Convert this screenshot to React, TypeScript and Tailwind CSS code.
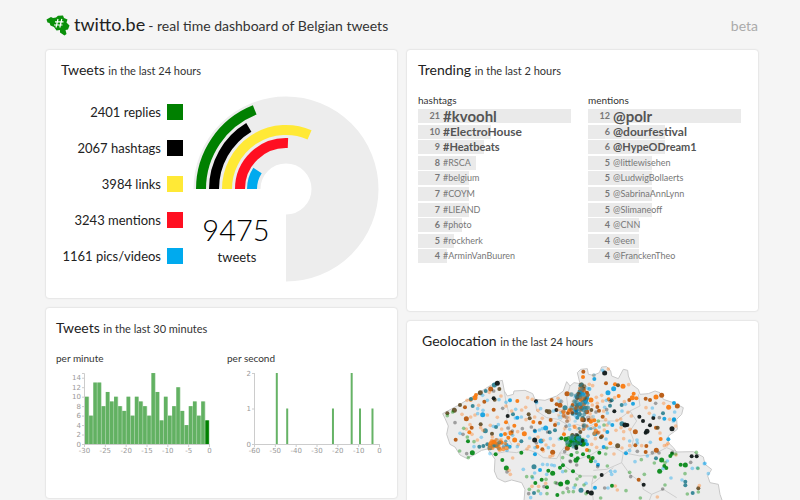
import React from "react";

const legend = [
  { value: 2401, label: "replies", color: "#008000", bg: "bg-[#008000]", r: 85 },
  { value: 2067, label: "hashtags", color: "#000000", bg: "bg-black", r: 72 },
  { value: 3984, label: "links", color: "#ffe936", bg: "bg-[#ffe936]", r: 59 },
  { value: 3243, label: "mentions", color: "#ff0f21", bg: "bg-[#ff0f21]", r: 46 },
  { value: 1161, label: "pics/videos", color: "#00aaee", bg: "bg-[#00aaee]", r: 34 },
];
const total = 9475;

const hashtags: [number, string][] = [
  [21, "#kvoohl"], [10, "#ElectroHouse"], [9, "#Heatbeats"], [8, "#RSCA"], [7, "#belgium"],
  [7, "#COYM"], [7, "#LIEAND"], [6, "#photo"], [5, "#rockherk"], [4, "#ArminVanBuuren"],
];
const mentions: [number, string][] = [
  [12, "@polr"], [6, "@dourfestival"], [6, "@HypeODream1"], [5, "@littlewisehen"], [5, "@LudwigBollaerts"],
  [5, "@SabrinaAnnLynn"], [5, "@Slimaneoff"], [4, "@CNN"], [4, "@een"], [4, "@FranckenTheo"],
];

const perMinute = [10, 6, 13, 13, 8, 11, 9, 10, 8, 7, 10, 6, 10, 9, 8, 6, 15, 11, 5, 10, 6, 8, 12, 7, 4, 8, 9, 6, 9, 5];
const perSecond: [number, number][] = [[10, 2], [15, 1], [37, 1], [46, 2], [50, 1], [56, 1]];

function Card({ className = "", children }: { className?: string; children: React.ReactNode }) {
  return (
    <section className={"rounded-[3px] bg-white shadow-[0_0_2px_rgba(0,0,0,0.2)] " + className}>{children}</section>
  );
}

function Title({ main, rest }: { main: string; rest: string }) {
  return (
    <h2 className="text-[14px] leading-5 text-[#222]">
      {main} <span className="text-[11px] text-[#333]">{rest}</span>
    </h2>
  );
}

function Gauge() {
  const cx = 94;
  const cy = 94;
  const arc = (r: number, deg: number) => {
    const a = ((180 + deg) * Math.PI) / 180;
    return `M${cx - r} ${cy}A${r} ${r} 0 ${deg > 180 ? 1 : 0} 1 ${cx + r * Math.cos(a)} ${cy + r * Math.sin(a)}`;
  };
  return (
    <svg viewBox="0 0 188 188" className="h-[188px] w-[188px] shrink-0" role="img" aria-label="9475 tweets">
      <path d={arc(59, 270)} fill="none" stroke="#ededed" strokeWidth="67" />
      {legend.map((l) => (
        <path key={l.label} d={arc(l.r, (270 * l.value) / total)} fill="none" stroke={l.color} strokeWidth="10" />
      ))}
      <text x="44" y="146" textAnchor="middle" fontSize="29" fontWeight="300" fill="#000">9475</text>
      <text x="45" y="167" textAnchor="middle" fontSize="13" fill="#222">tweets</text>
    </svg>
  );
}

function Ranking({ title, items }: { title: string; items: [number, string][] }) {
  const max = items[0][0];
  const size = (i: number) =>
    i === 0 ? "text-[15px] font-bold text-[#555]" : i === 1 ? "text-[12px] font-bold text-[#555]" : i === 2 ? "text-[11px] font-bold text-[#555]" : "text-[9px] text-[#777]";
  return (
    <div className="min-w-0 flex-1">
      <h3 className="text-[10px] leading-[14px] text-[#333]">{title}</h3>
      <ol className="mt-0.5 flex h-[156px] flex-col">
        {items.map(([n, name], i) => (
          <li key={name} className="grid flex-1 items-start">
            <span className="col-start-1 row-start-1 h-3.5 bg-[#eaeaea]" style={{ width: `${(n / max) * 100}%` }} />
            <span className="col-start-1 row-start-1 flex h-3.5 items-center gap-[3px] leading-[14px]">
              <span className="w-[22px] text-right text-[9px] font-bold text-[#777]">{n}</span>
              <span className={"whitespace-nowrap " + size(i)}>{name}</span>
            </span>
          </li>
        ))}
      </ol>
    </div>
  );
}

function Axes({ xs, ys, yMax }: { xs: number[]; ys: number[]; yMax: number }) {
  const x0 = xs[0];
  return (
    <g fontFamily="'DejaVu Sans', sans-serif" fontSize="7" fill="#999">
      <path d="M25 5.5H27.5V76.5H152.5V79" fill="none" stroke="#ccc" />
      {ys.map((v) => {
        const y = 76.5 - (71 * v) / yMax;
        return (
          <g key={v}>
            <path d={`M25 ${y}H28`} stroke="#ccc" />
            <text x="24" y={y + 2} textAnchor="end">{v}</text>
          </g>
        );
      })}
      {xs.map((v) => {
        const x = 27.5 + (125 * (v - x0)) / -x0;
        return (
          <g key={v}>
            <path d={`M${x} 76V79`} stroke="#ccc" />
            <text x={x} y="85" textAnchor="middle">{v}</text>
          </g>
        );
      })}
    </g>
  );
}

function MinuteChart() {
  return (
    <svg viewBox="0 0 165 90" className="h-[90px] w-[165px]" role="img" aria-label="Tweets per minute">
      {perMinute.map((v, i) => (
        <g key={i} fill="#008000">
          <rect x={28 + i * 4.15} y={76 - v * 4.73} width="4.15" height={v * 4.73} opacity="0.3" />
          <rect x={28 + i * 4.15} y={76 - v * 4.73} width="3.5" height={v * 4.73} opacity={i === 29 ? 1 : 0.45} />
        </g>
      ))}
      <Axes xs={[-30, -25, -20, -15, -10, -5, 0]} ys={[0, 2, 4, 6, 8, 10, 12, 14]} yMax={15} />
    </svg>
  );
}

function SecondChart() {
  return (
    <svg viewBox="0 0 165 90" className="h-[90px] w-[165px]" role="img" aria-label="Tweets per second">
      {perSecond.map(([i, v]) => (
        <rect key={i} x={28 + i * 2.08} y={76 - v * 35.5} width="2" height={v * 35.5} fill="#008000" opacity="0.6" />
      ))}
      <Axes xs={[-60, -50, -40, -30, -20, -10, 0]} ys={[0, 1, 2]} yMax={2} />
    </svg>
  );
}

const palette: Record<string, [string, number]> = {
  O: ["#f97a10", 0.95], o: ["#ff8020", 0.4], B: ["#0a9fe0", 0.9], b: ["#00a0f0", 0.38],
  G: ["#0a8a1a", 0.95], g: ["#008a00", 0.4], K: ["#101818", 0.95], k: ["#000000", 0.33],
  T: ["#2a7f90", 0.9], N: ["#b8590f", 0.95], D: ["#5f4a25", 0.9],
};

// x, y pairs per colour: western half of the country
const west: Record<string, number[]> = {
  N: [272,234, 195,289, 253,272, 281,296, 199,323, 215,350, 167,386, 470,280, 480,283, 455,267, 465,342, 427,415, 458,424, 452,327, 420,335],
  O: [225,260, 212,266, 343,344, 352,270, 333,366, 412,407, 315,369, 325,380, 290,404, 282,392, 305,395, 297,412, 344,387, 400,333, 318,334, 208,364, 373,368, 228,252],
  D: [241,245, 298,234, 142,307, 180,282, 163,298, 284,266, 386,310, 440,300, 447,302, 389,322, 242,340, 276,368],
  T: [283,222, 213,264, 218,285, 257,240, 256,359, 339,310, 288,348, 262,400, 270,410, 238,407, 364,391, 449,364, 402,467, 465,358, 402,546, 250,405, 280,403],
  B: [437,351, 352,320, 330,268, 405,361, 248,311, 405,430, 320,402, 329,407, 423,390, 303,372, 420,477],
  K: [292,217, 281,262, 323,315, 408,271, 404,387, 469,297],
  G: [217,425, 287,430, 307,447, 364,425, 319,471, 406,516, 425,506, 445,479, 458,487, 472,552, 480,470, 441,529, 482,519, 204,391],
  o: [201,268, 236,283, 262,312, 292,319, 186,310, 212,318, 225,312, 199,354, 242,350, 210,341, 216,370, 232,387, 318,285, 335,300, 378,326, 383,260, 397,265, 365,297, 377,289, 414,298, 427,322, 404,318, 353,362, 414,378, 430,388, 438,402, 430,420, 461,403, 387,407, 381,414, 355,401, 338,441, 331,490, 305,354, 271,343, 277,378, 450,437, 458,433, 437,517, 416,526, 396,526, 474,262, 303,255, 268,244, 327,478, 249,358],
  b: [248,253, 233,293, 262,268, 318,274, 180,367, 222,407, 244,379, 233,308, 249,298, 297,266, 347,295, 422,293, 410,275, 364,318, 346,321, 427,353, 418,357, 451,383, 445,410, 478,384, 389,381, 338,373, 352,407, 321,418, 370,475, 404,486, 428,460, 442,461, 463,464, 440,490, 475,338, 405,410, 460,300, 392,560, 280,346, 295,341, 270,428, 398,501, 422,548, 455,462],
  g: [158,303, 222,392, 202,378, 179,420, 205,440, 191,352, 142,314, 380,497, 396,497, 438,505, 466,515, 441,548, 388,535, 415,540],
  k: [165,335, 189,370, 200,428, 310,408, 308,292, 281,240, 367,353, 404,358, 394,348, 337,360, 409,396, 471,517, 432,527, 443,363, 321,483, 386,548, 324,351],
};

// x, y pairs per colour: eastern half of the country
const east: Record<string, number[]> = {
  N: [21,128, 70,62, 81,125, 117,179, 80,182, 138,97, 257,143, 270,147, 226,242, 226,283, 259,285, 288,230, 289,298, 128,197, 86,207, 126,256, 22,292, 93,325, 208,147, 38,162, 305,133, 257,303, 112,168, 236,386, 352,165, 51,140, 24,186],
  O: [189,106, 165,100, 176,135, 221,128, 217,140, 151,277, 302,264, 92,212, 93,147, 69,78, 108,222, 81,297, 288,138, 28,178, 146,145, 12,250, 326,169, 229,142, 103,208],
  D: [64,102, 71,113, 94,177, 123,259, 76,150, 293,230, 61,243, 37,252, 173,284, 415,412, 174,103, 49,186, 70,206],
  T: [15,170, 150,164, 185,162, 155,148, 58,190, 51,165, 38,188, 75,170, 186,218, 288,322, 376,392, 376,403, 63,418, 398,426, 68,200, 52,200, 60,122, 69,130, 342,206, 309,187],
  B: [161,113, 142,243, 157,222, 103,84, 144,125, 198,307, 325,265, 81,280, 105,248, 342,205, 313,203, 66,122, 80,140, 131,288, 105,410, 59,160, 48,178, 114,341, 219,158, 342,156],
  K: [134,66, 238,197, 249,210, 257,245, 261,241, 270,223, 280,201, 202,222, 336,233, 395,316, 410,316, 125,372, 94,426, 49,291, 163,181, 251,401, 195,222, 83,423, 42,272],
  G: [18,265, 58,262, 33,271, 50,282, 68,280, 118,305, 86,317, 98,321, 48,328, 39,361, 313,345, 319,351, 299,361, 336,308, 331,315, 156,404, 22,394, 2,399, 93,331, 362,341, 376,342, 9,343, 53,322, 69,310, 305,327, 34,312, 4,262, 30,283, 60,275],
  o: [101,73, 88,100, 98,104, 145,54, 206,101, 164,140, 137,206, 133,237, 117,243, 168,238, 191,242, 191,263, 141,222, 125,133, 109,139, 97,162, 112,157, 128,150, 193,152, 204,184, 171,208, 214,195, 183,230, 210,235, 182,204, 311,157, 347,225, 329,205, 324,277, 313,284, 209,284, 186,291, 107,237, 106,263, 95,280, 110,289, 162,309, 245,284, 320,282, 166,405, 172,417, 292,438, 348,312, 418,404, 268,187, 258,170, 300,246, 90,188, 131,180, 21,210, 15,198],
  b: [102,72, 128,58, 83,112, 139,148, 134,169, 142,186, 186,180, 196,160, 118,228, 147,216, 86,233, 104,232, 84,256, 78,271, 231,267, 271,274, 232,276, 138,264, 344,183, 282,193, 340,210, 209,270, 209,299, 225,332, 106,331, 152,361, 165,361, 155,370, 144,411, 433,338, 435,337, 412,351, 397,352, 445,368, 366,387, 333,381, 309,353, 262,315, 322,330, 277,171, 8,362, 42,410, 78,397, 3,185, 28,222, 29,235],
  g: [132,222, 115,210, 137,309, 142,345, 244,326, 209,364, 253,370, 198,419, 241,441, 283,336, 315,335, 347,309, 409,304, 414,352, 375,368, 315,402, 382,429, 415,423, 8,320, 51,384, 46,402, 60,376, 72,402, 40,422, 9,425, 26,422, 78,428, 51,304, 140,291, 17,360, 105,378, 122,441, 88,299],
  k: [287,157, 108,183, 151,151, 140,176, 232,301, 277,305, 297,306, 392,334, 212,377, 308,414, 134,411, 50,342, 113,347, 14,302, 22,412, 32,332, 298,200, 337,304, 18,226, 30,330],
};

function Dots({ data }: { data: Record<string, number[]> }) {
  return (
    <>
      {Object.entries(data).map(([key, pts]) =>
        pts.map((x, i) => {
          if (i % 2) return null;
          const strong = key === key.toUpperCase();
          const r = strong ? (i % 8 === 0 ? 7.5 : 6) : 5.5;
          return <circle key={key + i} cx={x} cy={pts[i + 1]} r={r} fill={palette[key][0]} opacity={palette[key][1]} />;
        })
      )}
    </>
  );
}

// Dense cities are filled with a repeatable scatter: centre, spread, count, colours.
const cities: [number, number, number, number, number, string][] = [
  [545, 265, 22, 38, 75, "TBoNTbDT"],
  [527, 390, 22, 17, 48, "GTKgBGTg"],
  [288, 400, 32, 14, 34, "OoOToObO"],
  [540, 335, 55, 40, 34, "oNbTOko"],
  [505, 300, 35, 55, 22, "oNbokT"],
];

function CityDots() {
  let seed = 17;
  const rnd = () => (seed = (seed * 16807) % 2147483647) / 2147483647;
  const out: React.ReactNode[] = [];
  cities.forEach(([cx, cy, sx, sy, n, colors], c) => {
    for (let i = 0; i < n; i++) {
      const a = rnd() * Math.PI * 2;
      const d = rnd() + rnd() * 0.4;
      const [fill, opacity] = palette[colors[i % colors.length]];
      out.push(
        <circle key={`${c}-${i}`} cx={cx + Math.cos(a) * d * sx} cy={cy + Math.sin(a) * d * sy} r={5 + (i % 3)} fill={fill} opacity={opacity * 0.7} />
      );
    }
  });
  return <>{out}</>;
}

function BelgiumMap() {
  return (
    <svg viewBox="0 0 351 190" className="block w-full" role="img" aria-label="Map of Belgium with tweet locations">
      <g transform="translate(-7 -50) scale(0.33333)">
        <path
          d="M307 208L290 212L240 243L180 280L128 308L135 322L145 345L140 370L150 400L165 408L180 432L200 442L222 432L245 418L262 414L275 430L285 445L283 480L292 502L315 513L335 507L365 515L375 535L372 570L390 600L470 640L600 720H960L975 640L967 570L960 550L955 520L930 515L923 495L935 475L915 460L910 438L880 422L830 423L820 410L805 395L805 375L832 355L830 325L845 310L850 290L820 275L790 265L780 245L765 240L745 248L720 250L715 235L695 220L685 195L683 178L670 175L655 203L635 195L632 180L620 167L605 168L598 185L580 193L565 190L562 173L542 175L532 185L540 218L522 215L510 225L500 212L490 240L470 255L435 268L405 265L398 248L375 238L342 240L340 250L322 255L313 240Z"
          fill="#ececec" stroke="#c8c8c8" strokeWidth="3" strokeLinejoin="round"
        />
        <path
          d="M313 240L318 275L325 300L320 325L330 350L320 375L335 400L318 422L275 430M318 422L350 425L380 415L410 425L430 440L470 443L480 425L500 430M405 265L410 300L440 320L475 325L500 340L490 365L500 400L480 425L482 450L500 470L540 495L580 495L575 520L580 570L575 620M500 430L535 445L575 430L600 415L640 408L670 425L665 455L620 475L580 478M510 225L500 260L505 300L480 330M715 250L720 285L690 300L650 330L600 330L560 350L530 340L500 350M690 300L710 330L690 360L700 385L695 410L670 425L720 435L760 430L800 410L832 423M665 455L690 490L725 515L730 535L755 550L790 535L830 560M575 520L600 500L640 470M755 550L740 590"
          fill="none" stroke="#c8c8c8" strokeWidth="2.5"
        />
        <Dots data={west} />
        <g transform="translate(480 120)">
          <Dots data={east} />
        </g>
        <CityDots />
      </g>
    </svg>
  );
}

function Logo() {
  return (
    <svg viewBox="0 0 24 21" className="h-[21px] w-6" aria-hidden="true">
      <path d="M.5 4.5L5 2L7 3L10 2.5L12 .8L17 .5L18 3L21.5 4.5L20.5 7.5L23.5 10.5L22 14.5L19.5 15L20.5 19L18.5 20.5L14 17.5L14 15L10.5 15.5L8 12L4.5 10.5L3.5 8L1.5 7.5Z" fill="#0a900a" />
      <path d="M12 4L10 12.5M15.8 4L13.8 12.5M9 6.8H17.5M8 10H16.5" stroke="#fff" strokeWidth="1.2" fill="none" />
    </svg>
  );
}

export default function App() {
  return (
    <div className="h-screen overflow-hidden bg-[#f5f5f5] pr-[42px] pl-[46px] font-['Lato','Open_Sans',sans-serif]">
      <header className="flex h-[50px] items-center justify-between text-[14px]">
        <h1 className="flex items-center gap-1 text-[#333]">
          <Logo />
          <span className="flex items-baseline gap-[3px] leading-6">
            <span className="text-[18px] text-[#222]">twitto.be</span>
            <span>- real time dashboard of Belgian tweets</span>
          </span>
        </h1>
        <span className="text-[#aaa]">beta</span>
      </header>
      <main className="grid grid-cols-2 items-start gap-2.5">
        <div className="flex flex-col gap-2.5">
          <Card className="h-[248px] pt-2.5 pl-[15px]">
            <Title main="Tweets" rest="in the last 24 hours" />
            <div className="mt-3.5 flex">
              <ul className="mt-[9px] flex w-[122px] flex-col gap-5 text-[13px] leading-4 text-[#222]">
                {legend.map((l) => (
                  <li key={l.label} className="flex items-center justify-end gap-1.5">
                    <span className="whitespace-nowrap">{l.value} {l.label}</span>
                    <span className={"size-4 shrink-0 " + l.bg} />
                  </li>
                ))}
              </ul>
              <div className="ml-[9px]">
                <Gauge />
              </div>
            </div>
          </Card>
          <Card className="h-[190px] px-2.5 pt-2.5">
            <Title main="Tweets" rest="in the last 30 minutes" />
            <div className="mt-3 flex gap-[5px] text-[10px] leading-[14px] text-[#333]">
              <figure>
                <figcaption>per minute</figcaption>
                <div className="mt-[3px] ml-px">
                  <MinuteChart />
                </div>
              </figure>
              <figure>
                <figcaption>per second</figcaption>
                <div className="mt-[3px]">
                  <SecondChart />
                </div>
              </figure>
            </div>
          </Card>
        </div>
        <div className="flex flex-col gap-2.5">
          <Card className="h-[261px] pt-2.5 pr-[17px] pl-[11px]">
            <Title main="Trending" rest="in the last 2 hours" />
            <div className="mt-3 flex gap-[17px]">
              <Ranking title="hashtags" items={hashtags} />
              <Ranking title="mentions" items={mentions} />
            </div>
          </Card>
          <Card className="pt-2.5">
            <div className="pl-[15px]">
              <Title main="Geolocation" rest="in the last 24 hours" />
            </div>
            <div className="mt-[9px]">
              <BelgiumMap />
            </div>
          </Card>
        </div>
      </main>
    </div>
  );
}
